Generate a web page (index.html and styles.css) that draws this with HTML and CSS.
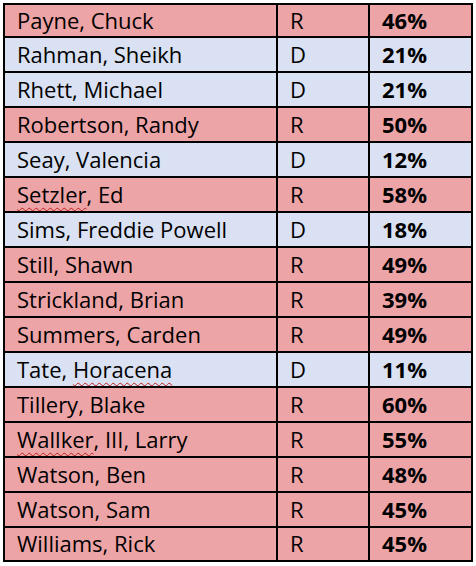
FILE: index.html
```html
<!DOCTYPE html>
<html>
<head>
<meta charset="utf-8">
<link rel="stylesheet" href="styles.css">
</head>
<body>
<table class="tally">
  <colgroup><col class="c-name"><col class="c-party"><col class="c-pct"></colgroup>
  <tbody>
    <tr class="r first"><td>Payne, Chuck</td><td>R</td><td class="pct">46%</td></tr>
    <tr class="d"><td>Rahman, Sheikh</td><td>D</td><td class="pct">21%</td></tr>
    <tr class="d"><td>Rhett, Michael</td><td>D</td><td class="pct">21%</td></tr>
    <tr class="r"><td>Robertson, Randy</td><td>R</td><td class="pct">50%</td></tr>
    <tr class="d"><td>Seay, Valencia</td><td>D</td><td class="pct">12%</td></tr>
    <tr class="r"><td><span class="spell">Setzler</span>, Ed</td><td>R</td><td class="pct">58%</td></tr>
    <tr class="d"><td>Sims, Freddie Powell</td><td>D</td><td class="pct">18%</td></tr>
    <tr class="r"><td>Still, Shawn</td><td>R</td><td class="pct">49%</td></tr>
    <tr class="r"><td>Strickland, Brian</td><td>R</td><td class="pct">39%</td></tr>
    <tr class="r"><td>Summers, Carden</td><td>R</td><td class="pct">49%</td></tr>
    <tr class="d"><td>Tate, <span class="spell">Horacena</span></td><td>D</td><td class="pct">11%</td></tr>
    <tr class="r"><td>Tillery, Blake</td><td>R</td><td class="pct">60%</td></tr>
    <tr class="r"><td><span class="spell">Wallker</span>, III, Larry</td><td>R</td><td class="pct">55%</td></tr>
    <tr class="r"><td>Watson, Ben</td><td>R</td><td class="pct">48%</td></tr>
    <tr class="r"><td>Watson, Sam</td><td>R</td><td class="pct">45%</td></tr>
    <tr class="r last"><td>Williams, Rick</td><td>R</td><td class="pct">45%</td></tr>
  </tbody>
</table>
</body>
</html>
```
FILE: styles.css
```css
html, body {
  margin: 0;
  padding: 0;
  background: #ffffff;
}
body {
  width: 476px;
  height: 566px;
  overflow: hidden;
}
.tally {
  margin: 3px 0 0 3px;
  border-collapse: collapse;
  table-layout: fixed;
  width: 468px;
  font-family: "Open Sans", Lato, sans-serif;
  font-size: 22px;
  color: #000;
}
.c-name { width: 273px; }
.c-party { width: 92px; }
.c-pct { width: 103px; }
.tally td {
  border: 2px solid #000;
  padding: 0 0 2px 12px;
  height: 35px;
  box-sizing: border-box;
  vertical-align: middle;
  white-space: nowrap;
  line-height: 26px;
}
.tally tr.first td { height: 33px; }
.tally tr.last td { height: 34px; }
.tally tr.r td { background: #eda4a7; }
.tally tr.d td { background: #d9e1f2; }
.tally td.pct { font-weight: 700; }
.spell {
  text-decoration: underline wavy #c0201a;
  text-decoration-thickness: 1px;
  text-underline-offset: 4px;
}
```
